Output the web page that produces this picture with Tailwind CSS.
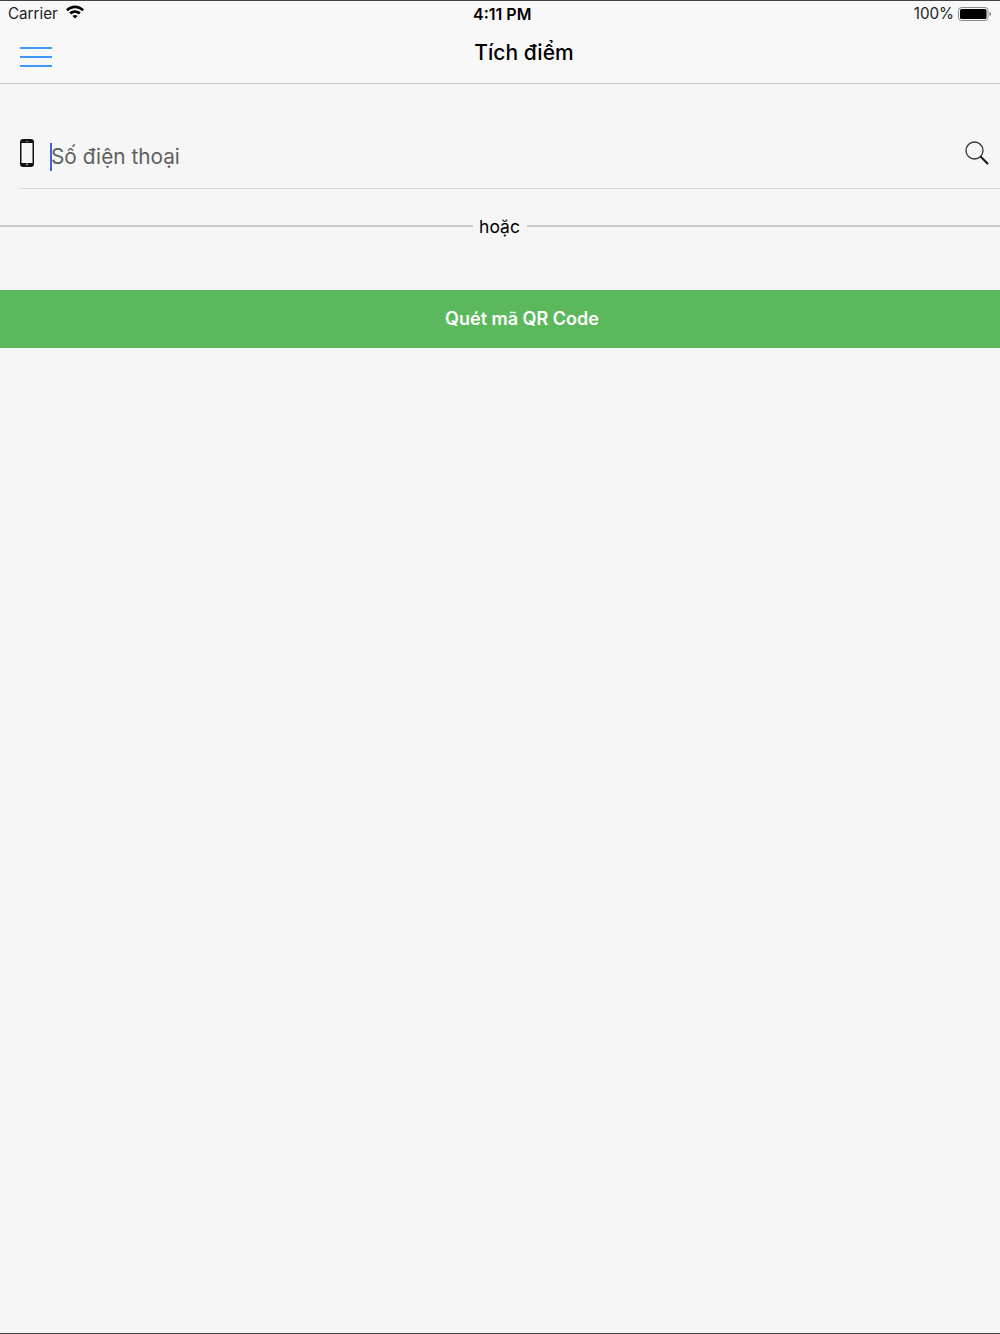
<!DOCTYPE html>
<html lang="vi"><head><meta charset="utf-8"><script src="https://cdn.jsdelivr.net/npm/@tailwindcss/browser@4"></script></head>
<body class="bg-[#f6f6f6]">
<div class="w-[1000px] h-[1334px] flex flex-col overflow-hidden font-['Inter','Roboto',sans-serif] text-black border-t border-b border-[#444]">
  <header class="h-[83px] shrink-0 bg-[#f8f8f8] border-b border-[#c8c8c8] flex flex-col">
    <div class="h-[26px] relative flex items-center justify-between pl-2 pr-[9px] text-[15px]">
      <div class="flex items-center gap-[8px]"><span class="text-[15.2px] text-[#222]">Carrier</span>
        <svg class="w-[18px] h-[14px] -mt-[4px]" viewBox="0 0 18 14"><path d="M0 4.300C5 -0.800 13 -0.800 18 4.300L16.200 6.300C11.900 2.200 6.100 2.200 1.800 6.300Z M3.300 7.600C6.600 4.500 11.400 4.500 14.700 7.600L12.800 9.600C10.500 7.600 7.500 7.600 5.200 9.600Z M6.500 11C8 9.700 10 9.700 11.500 11L9 13.600Z" fill="#000"/></svg>
      </div>
      <span class="absolute left-[473px] text-[16px] font-semibold">4:11 PM</span>
      <div class="flex items-center gap-[4px]"><span class="text-[15.2px] text-[#222]">100%</span>
        <svg class="w-[33px] h-[14px]" viewBox="0 0 33 14"><rect x="0.500" y="0.500" width="29.500" height="13" rx="3" fill="none" stroke="#8a8a8a"/><rect x="2" y="2" width="26.500" height="10" rx="1.500" fill="#000"/><path d="M31.500 5C32.300 5.200 32.800 6 32.800 7C32.800 8 32.300 8.800 31.500 9Z" fill="#666"/></svg>
      </div>
    </div>
    <div class="relative flex-1 flex items-center justify-center pl-[48px] pb-[5px]">
      <button class="absolute left-[20px] top-[20px] w-[32px] flex flex-col gap-[7px]"><span class="block h-[2px] bg-[#3b99fc]"></span><span class="block h-[2px] bg-[#3b99fc]"></span><span class="block h-[2px] bg-[#3b99fc]"></span></button>
      <h1 class="text-[21px] font-medium">Tích điểm</h1>
    </div>
  </header>
  <main class="flex-1 flex flex-col">
    <div class="ml-[20px] mt-[41px] h-[64px] border-b border-[#d8d8d8] flex items-center pr-[10px]">
      <svg class="w-[14px] h-[28px] -mt-[8px]" viewBox="0 0 14 28"><rect x="0.750" y="0.750" width="12.500" height="26.500" rx="2.500" fill="#f6f6f6" stroke="#111" stroke-width="1.500"/><path d="M1 3C1 1.500 1.500 1 3 1H11C12.500 1 13 1.500 13 3V4H1Z M1 24H13V25C13 26.500 12.500 27 11 27H3C1.500 27 1 26.500 1 25Z" fill="#111"/><circle cx="7" cy="25.500" r="1" fill="#aaa"/><rect x="5.500" y="2.200" width="3" height="0.600" fill="#aaa"/></svg>
      <div class="ml-[16px] flex-1 flex items-center"><span class="w-[2px] h-[28px] bg-[#3f63e0]"></span><span class="-ml-[1px] text-[20.8px] text-[#5f5f5f]">Số điện thoại</span></div>
      <svg class="w-[24px] h-[24px] -mt-[7px] -ml-[1px] mr-px" viewBox="0 0 24 24" fill="none" stroke="#333"><circle cx="9.500" cy="9.500" r="8.500" stroke-width="1.300"/><path d="M15.500 15.500L23 23" stroke="#111" stroke-width="2"/></svg>
    </div>
    <div class="mt-[26px] flex items-center"><span class="flex-1 h-[2px] bg-[#c8c8c8]"></span><span class="px-[7px] pt-[2px] text-[17.5px] leading-[20px] -ml-px">hoặc</span><span class="flex-1 h-[2px] bg-[#c8c8c8]"></span></div>
    <button class="mt-[53px] h-[58px] bg-[#5cb85c] text-white text-[18px] font-semibold pl-[44px] pb-[2px]">Quét mã QR Code</button>
  </main>
</div>
</body></html>
